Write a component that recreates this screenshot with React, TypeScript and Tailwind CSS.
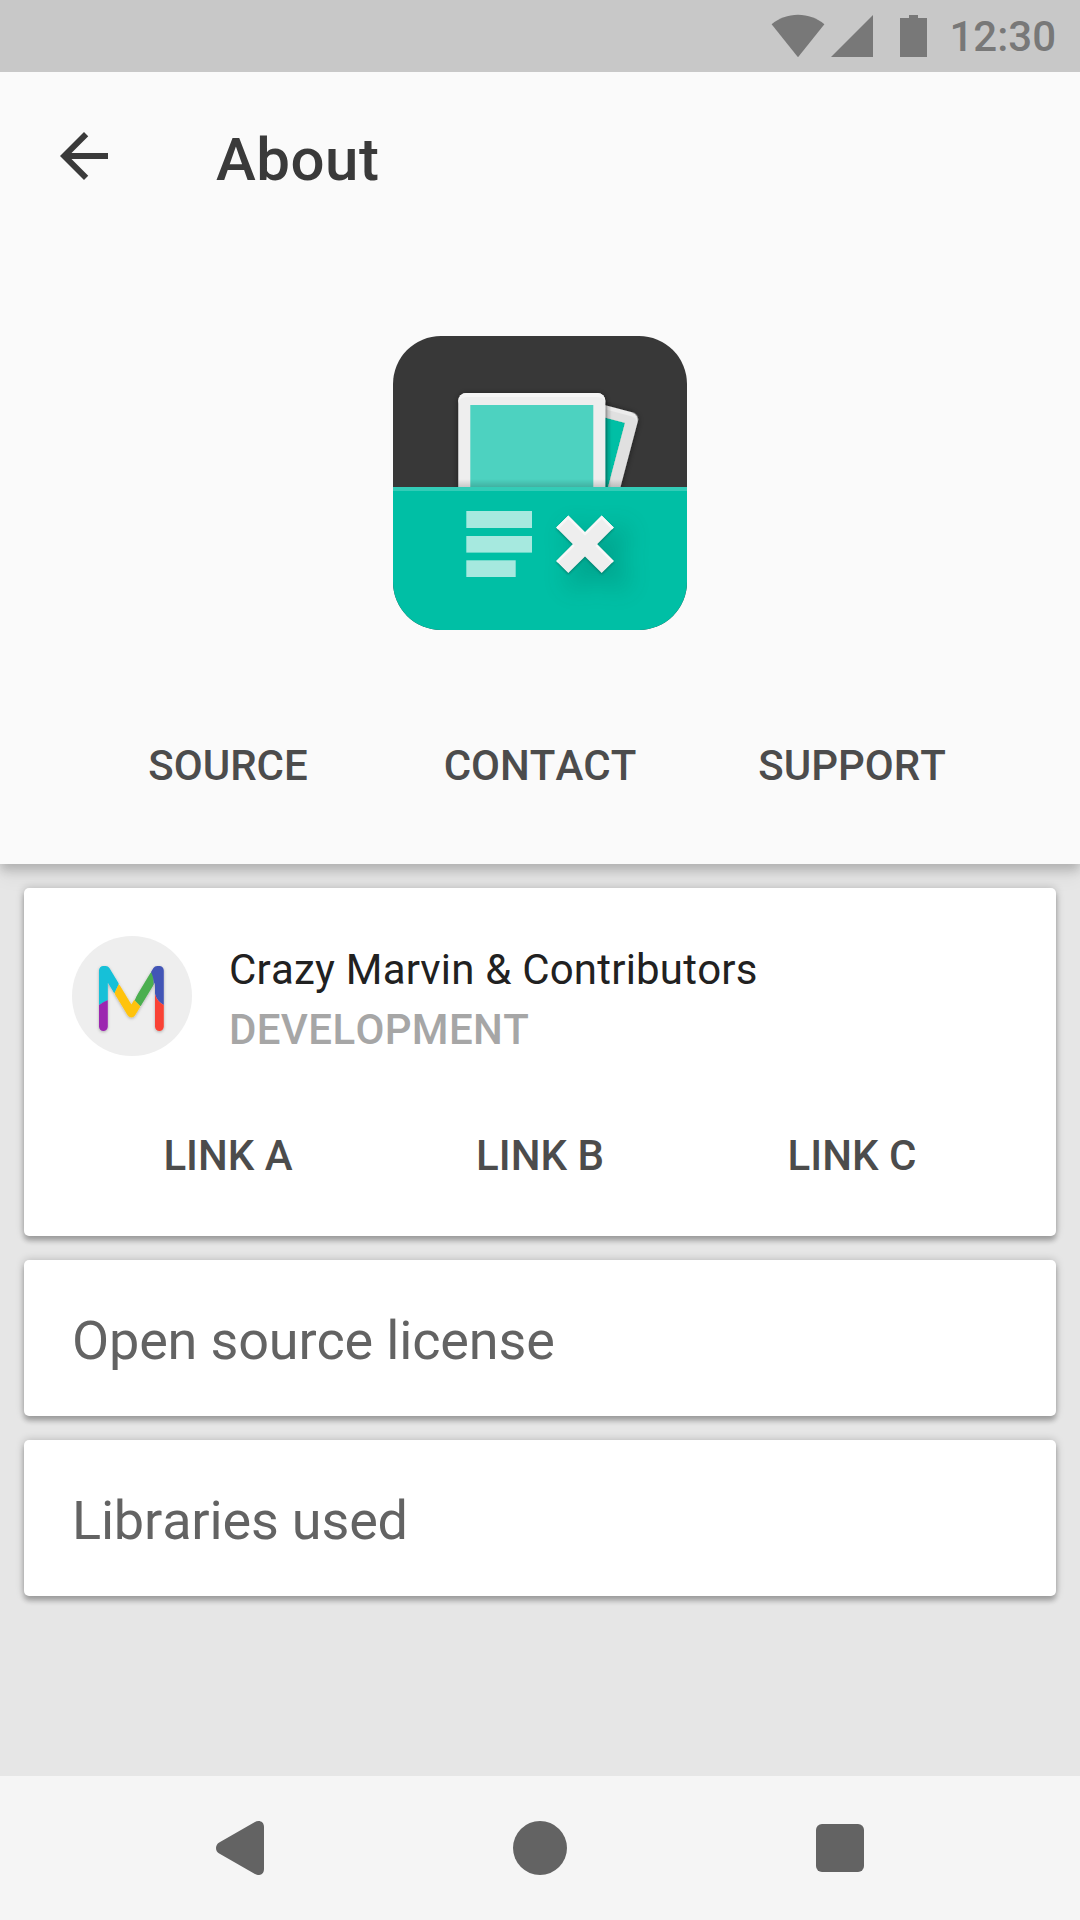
import React from "react";

function StatusBar() {
  return (
    <div className="relative z-10 flex h-[72px] items-center justify-end bg-[#c8c8c8] pr-[24px] text-[#787878]">
      <svg width="156" height="72" viewBox="0 0 156 72" fill="currentColor" className="mr-[22px]">
        <path d="M0.6 24.2C8 18.2 17 14.8 27 14.8S46 18.2 53.4 24.2L27 57.2Z" />
        <path d="M102 15V57H60Z" />
        <path d="M138 15H147V18H156V57H129V18H138Z" />
      </svg>
      <span className="pt-[2px] text-[42px] font-medium leading-[70px]">12:30</span>
    </div>
  );
}

function AppLogo() {
  return (
    <svg width="294" height="294" viewBox="0 0 294 294">
      <defs>
        <clipPath id="logo-shape">
          <rect width="294" height="294" rx="48" />
        </clipPath>
        <clipPath id="logo-top">
          <rect width="294" height="151" />
        </clipPath>
        <clipPath id="front-photo">
          <rect x="65.3" y="57" width="147" height="120" rx="8" />
        </clipPath>
        <filter id="photo-shadow" x="-20%" y="-20%" width="140%" height="140%">
          <feDropShadow dx="0" dy="1" stdDeviation="3" floodColor="#000" floodOpacity="0.5" />
        </filter>
        <filter id="soft" x="-60%" y="-60%" width="220%" height="220%">
          <feGaussianBlur stdDeviation="11" />
        </filter>
        <filter id="tight" x="-20%" y="-20%" width="140%" height="140%">
          <feGaussianBlur stdDeviation="0.8" />
        </filter>
        <linearGradient id="pocket-shade" x1="0" y1="0" x2="0" y2="1">
          <stop offset="0" stopColor="#000" stopOpacity="0" />
          <stop offset="1" stopColor="#000" stopOpacity="0.16" />
        </linearGradient>
      </defs>
      <g clipPath="url(#logo-shape)">
        <rect width="294" height="294" fill="#383838" />
        <g clipPath="url(#logo-top)">
          <g transform="translate(246.7 78.3) rotate(14.8)" filter="url(#photo-shadow)">
            <rect x="-70" y="0" width="70" height="160" rx="8" fill="#ececec" />
            <path d="M-70 12Q-70 4 -62 4H-8Q0 4 0 12V160H-70Z" fill="#e0e0e0" />
            <rect x="-60" y="12" width="48" height="150" fill="#00bfa5" />
          </g>
          <rect x="212" y="64" width="2.3" height="90" fill="#000" opacity="0.1" />
          <rect x="212" y="66" width="5.5" height="90" fill="#000" opacity="0.05" />
          <g filter="url(#photo-shadow)">
            <rect x="65.3" y="57" width="147" height="120" rx="8" fill="#eeeeee" />
          </g>
          <g clipPath="url(#front-photo)">
            <path d="M65 57H213V68Q212 61 204 61H74Q66 61 65 68Z" fill="#f5f5f5" />
          </g>
          <rect x="77.3" y="69" width="123" height="90" fill="#4dd2c0" />
          <path d="M65.3 143H230L227.5 151H65.3Z" fill="url(#pocket-shade)" />
        </g>
        <rect y="151" width="294" height="143" fill="#00bfa5" />
        <rect y="151" width="294" height="4" fill="#33ccb7" />
        <g fill="#a6e9df">
          <rect x="73.3" y="175" width="65.7" height="17" />
          <rect x="73.3" y="200" width="65.7" height="16.6" />
          <rect x="73.3" y="224.3" width="49.4" height="16.7" />
        </g>
        <g transform="translate(192 208.3)">
          <path
            transform="translate(12 13) scale(1.15)"
            d="M-16.7-28.8L0-12.1L16.7-28.8L28.8-16.7L12.1 0L28.8 16.7L16.7 28.8L0 12.1L-16.7 28.8L-28.8 16.7L-12.1 0L-28.8-16.7Z"
            fill="#004d40"
            opacity="0.26"
            filter="url(#soft)"
          />
          <path
            transform="translate(0 1.3)"
            d="M-16.7-28.8L0-12.1L16.7-28.8L28.8-16.7L12.1 0L28.8 16.7L16.7 28.8L0 12.1L-16.7 28.8L-28.8 16.7L-12.1 0L-28.8-16.7Z"
            fill="#004d40"
            opacity="0.45"
            filter="url(#tight)"
          />
          <path
            d="M-16.7-28.8L0-12.1L16.7-28.8L28.8-16.7L12.1 0L28.8 16.7L16.7 28.8L0 12.1L-16.7 28.8L-28.8 16.7L-12.1 0L-28.8-16.7Z"
            fill="#eeeeee"
          />
          <path
            d="M-28.8-16.7L-16.7-28.8L0-12.1L16.7-28.8L28.8-16.7L27-14.9L16.7-25.2L0-8.5L-16.7-25.2L-27-14.9ZM-12.1 0L-28.8 16.7L-27 18.5L-10.3 1.8ZM12.1 0L28.8 16.7L27 18.5L10.3 1.8Z"
            fill="#f7f7f7"
          />
        </g>
      </g>
    </svg>
  );
}

function Avatar() {
  return (
    <svg width="120" height="120" viewBox="0 0 120 120">
      <defs>
        <mask id="m-mask" maskUnits="userSpaceOnUse" x="0" y="0" width="120" height="120">
          <path
            d="M31.4 90.6V34.4H33.6L59.4 77L85.2 34.4H87.4V90.6"
            fill="none"
            stroke="#fff"
            strokeWidth="8.8"
            strokeLinecap="round"
            strokeLinejoin="round"
          />
        </mask>
        <filter id="m-shadow" x="-20%" y="-20%" width="140%" height="140%">
          <feDropShadow dx="0" dy="1" stdDeviation="1.5" floodColor="#000" floodOpacity="0.28" />
        </filter>
      </defs>
      <circle cx="60" cy="60" r="60" fill="#eeeeee" />
      <g filter="url(#m-shadow)">
        <g mask="url(#m-mask)">
          <path d="M20 20H50L46.7 48.3Q44.5 53 42.7 56.7L36 64L27 69H20Z" fill="#12c0d8" />
          <path d="M20 72L27 69Q31 66 36 64V100H20Z" fill="#9c27b0" />
          <path d="M46.7 48.3Q44.5 53 42.7 56.7L40 90H66L68.3 70L62.7 64.3L60 60Z" fill="#ffc30f" />
          <path d="M62.7 64.3L68.3 70H74L81.7 49Q82 42 80.5 36L74 38Z" fill="#4caf50" />
          <path d="M78 25H100V72L91.7 69Q85 65 83.3 59L81.7 49Q82 42 79 36Z" fill="#4355b6" />
          <path d="M82 56L83.3 59Q85 65 91.7 69H96V100H80Z" fill="#f94336" />
        </g>
      </g>
    </svg>
  );
}

function Actions({ labels }: { labels: string[] }) {
  return (
    <div className="grid grid-cols-3">
      {labels.map((label) => (
        <button
          key={label}
          className="text-center text-[42px] font-medium leading-[60px] text-[#4c4c4c]"
        >
          {label}
        </button>
      ))}
    </div>
  );
}

function Card({ className = "", children }: { className?: string; children: React.ReactNode }) {
  return (
    <section
      className={
        "rounded-[5px] bg-white shadow-[0_5px_5px_rgba(0,0,0,0.24),0_0_8px_rgba(0,0,0,0.22)] " + className
      }
    >
      {children}
    </section>
  );
}

export default function App() {
  return (
    <div className="flex h-[1920px] w-[1080px] flex-col overflow-hidden bg-[#e6e6e6] font-['Roboto',sans-serif] [font-kerning:none]">
      <StatusBar />
      <header className="h-[792px] bg-[#fafafa] shadow-[0_6px_10px_rgba(0,0,0,0.20),0_16px_16px_rgba(0,0,0,0.04)]">
        <div className="flex h-[168px] items-center pl-[48px]">
          <svg width="72" height="72" viewBox="0 0 24 24" fill="#3a3a3a">
            <path d="M20 11H7.83l5.59-5.59L12 4l-8 8 8 8 1.41-1.41L7.83 13H20v-2z" />
          </svg>
          <h1 className="ml-[96px] pt-[7px] text-[60px] font-medium leading-[72px] tracking-[0.5px] text-[#3a3a3a]">
            About
          </h1>
        </div>
        <div className="flex justify-center pt-[96px]">
          <AppLogo />
        </div>
        <div className="px-[72px] pt-[106px]">
          <Actions labels={["SOURCE", "CONTACT", "SUPPORT"]} />
        </div>
      </header>
      <main className="flex grow flex-col gap-[24px] p-[24px]">
        <Card className="h-[348px] px-[48px] pt-[48px]">
          <div className="flex h-[124px]">
            <Avatar />
            <div className="ml-[37px] pt-[4px] text-[42px] leading-[60px]">
              <p className="tracking-[0.21px] text-[#212121]">Crazy Marvin &amp; Contributors</p>
              <p className="font-medium tracking-[0.35px] text-[#a6a6a6]">DEVELOPMENT</p>
            </div>
          </div>
          <div className="pt-[66px]">
            <Actions labels={["LINK A", "LINK B", "LINK C"]} />
          </div>
        </Card>
        {["Open source license", "Libraries used"].map((title) => (
          <Card key={title} className="flex h-[156px] items-center px-[48px] pt-[5px]">
            <h2 className="text-[54px] leading-[64px] tracking-[-0.17px] text-[#636363]">{title}</h2>
          </Card>
        ))}
      </main>
      <nav className="flex h-[144px] items-center justify-between bg-[#f5f5f5] pl-[215px] pr-[216px] text-[#636363]">
        <svg width="49" height="54" viewBox="0 0 49 54" fill="currentColor">
          <path d="M39.5 1.2C44 -1.4 49 0.5 49 6V48C49 53.5 44 55.6 39.5 52.8L4.2 32.6Q1 30.6 1 27T4.2 21.4Z" />
        </svg>
        <div className="size-[54px] rounded-full bg-current" />
        <div className="size-[48px] rounded-[6px] bg-current" />
      </nav>
    </div>
  );
}
